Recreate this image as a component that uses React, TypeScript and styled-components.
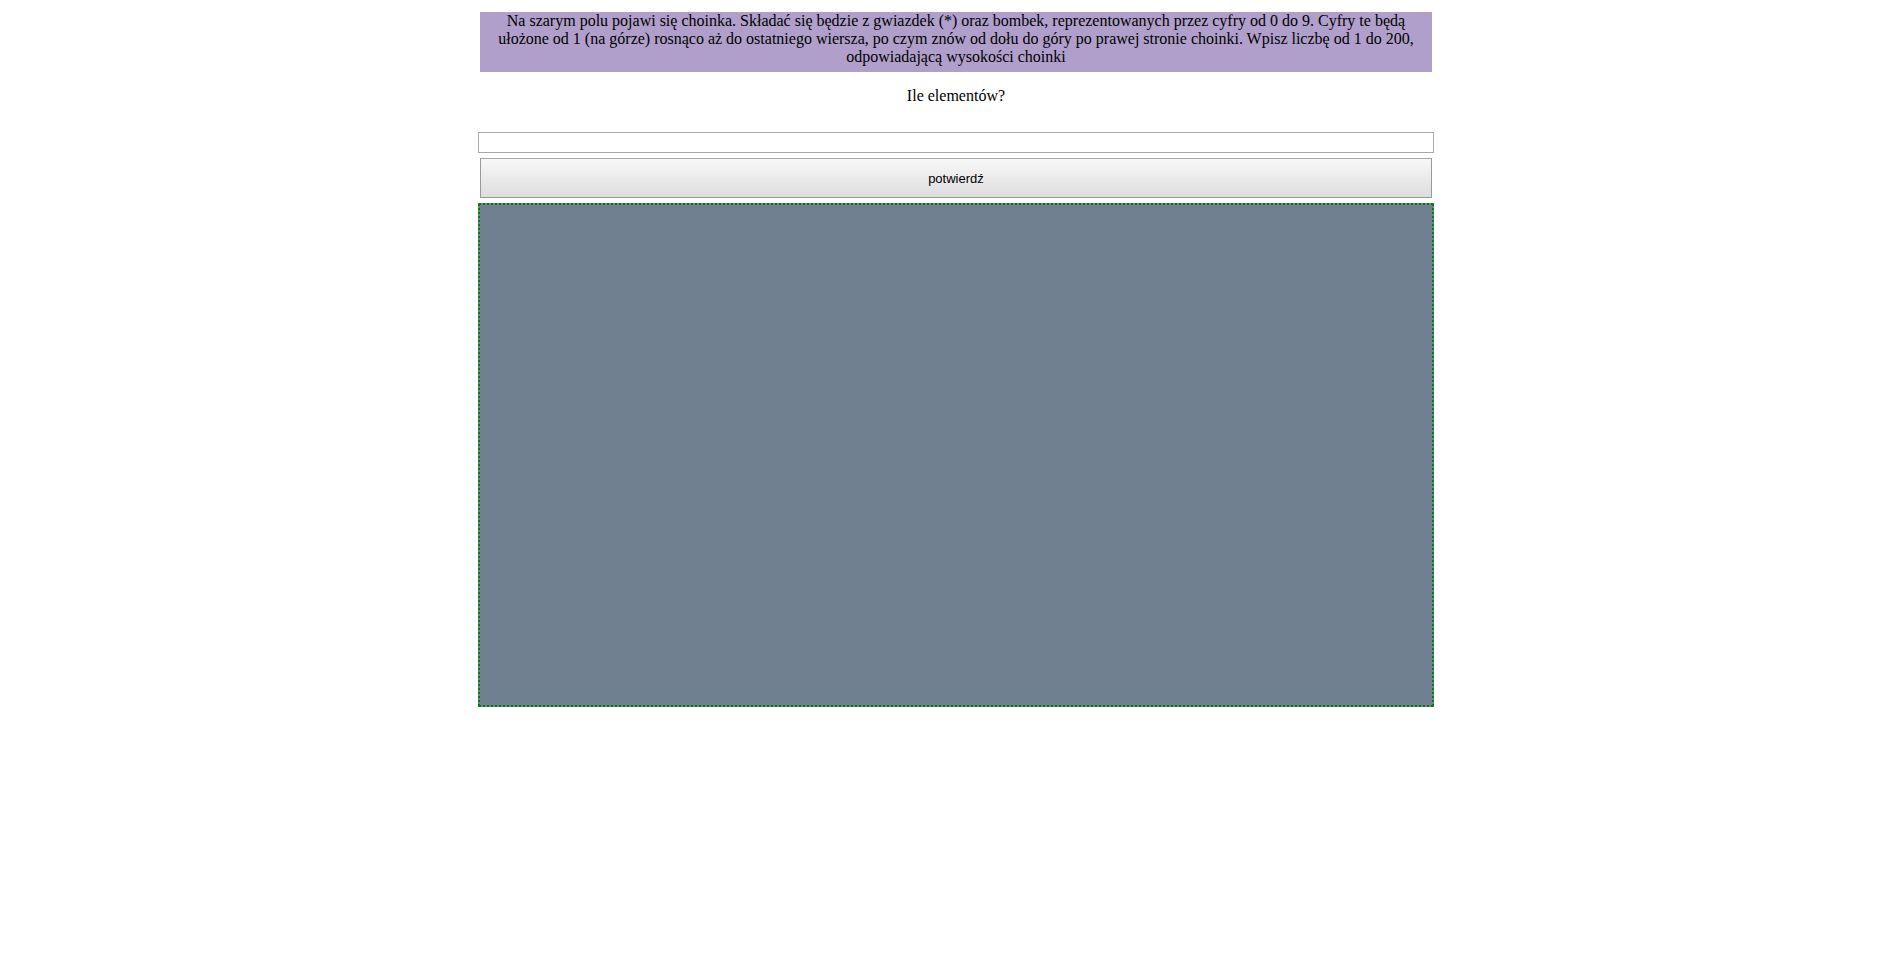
import React from 'react';
import styled, { createGlobalStyle } from 'styled-components';

const GlobalStyle = createGlobalStyle`
  body {
    margin: 0;
    background: #fff;
    color: #000;
    font: 16px/18px "Liberation Serif", "Times New Roman", serif;
  }
`;

const Page = styled.main`
  width: 50.5%;
  margin-left: 25.25%;
  padding-top: 12px;
  display: flex;
  flex-direction: column;
`;

const Intro = styled.p`
  margin: 0 2px;
  padding: 0 10px 6px;
  background: #b09fca;
  text-align: center;
`;

const Question = styled.label`
  margin: 15px 0 27px;
  text-align: center;
`;

const CountInput = styled.input`
  box-sizing: border-box;
  height: 21px;
  padding: 1px;
  border: 1px solid #a9a9a9;
  background: #fff;
`;

const ConfirmButton = styled.button`
  height: 40px;
  margin: 5px 2px;
  padding: 0;
  border: 1px solid;
  border-color: #a6a6a6 #999 #949494 #999;
  background: linear-gradient(#f8f8f8, #dddddd);
  color: #000;
  font: 13px "Liberation Sans", Arial, sans-serif;
`;

/* Square dots along each edge of the field, 2px on and 2px off. */
const dots = (angle: string) =>
  `repeating-linear-gradient(${angle}, transparent 0 1px, green 1px 3px, transparent 3px 4px)`;

const TreeField = styled.section`
  height: 504px;
  background:
    ${dots('90deg')} top / 100% 2px no-repeat,
    ${dots('90deg')} bottom / 100% 2px no-repeat,
    ${dots('180deg')} left / 2px 100% no-repeat,
    ${dots('180deg')} right / 2px 100% no-repeat,
    slategray;
`;

export default function App() {
  return (
    <>
      <GlobalStyle />
      <Page>
        <Intro>
          Na szarym polu pojawi się choinka. Składać się będzie z gwiazdek (*) oraz bombek,
          reprezentowanych przez cyfry od 0 do 9. Cyfry te będą ułożone od 1 (na górze) rosnąco aż
          do ostatniego wiersza, po czym znów od dołu do góry po prawej stronie choinki. Wpisz
          liczbę od 1 do 200, odpowiadającą wysokości choinki
        </Intro>
        <Question htmlFor="count">Ile elementów?</Question>
        <CountInput id="count" type="text" />
        <ConfirmButton type="button">potwierdź</ConfirmButton>
        <TreeField />
      </Page>
    </>
  );
}
